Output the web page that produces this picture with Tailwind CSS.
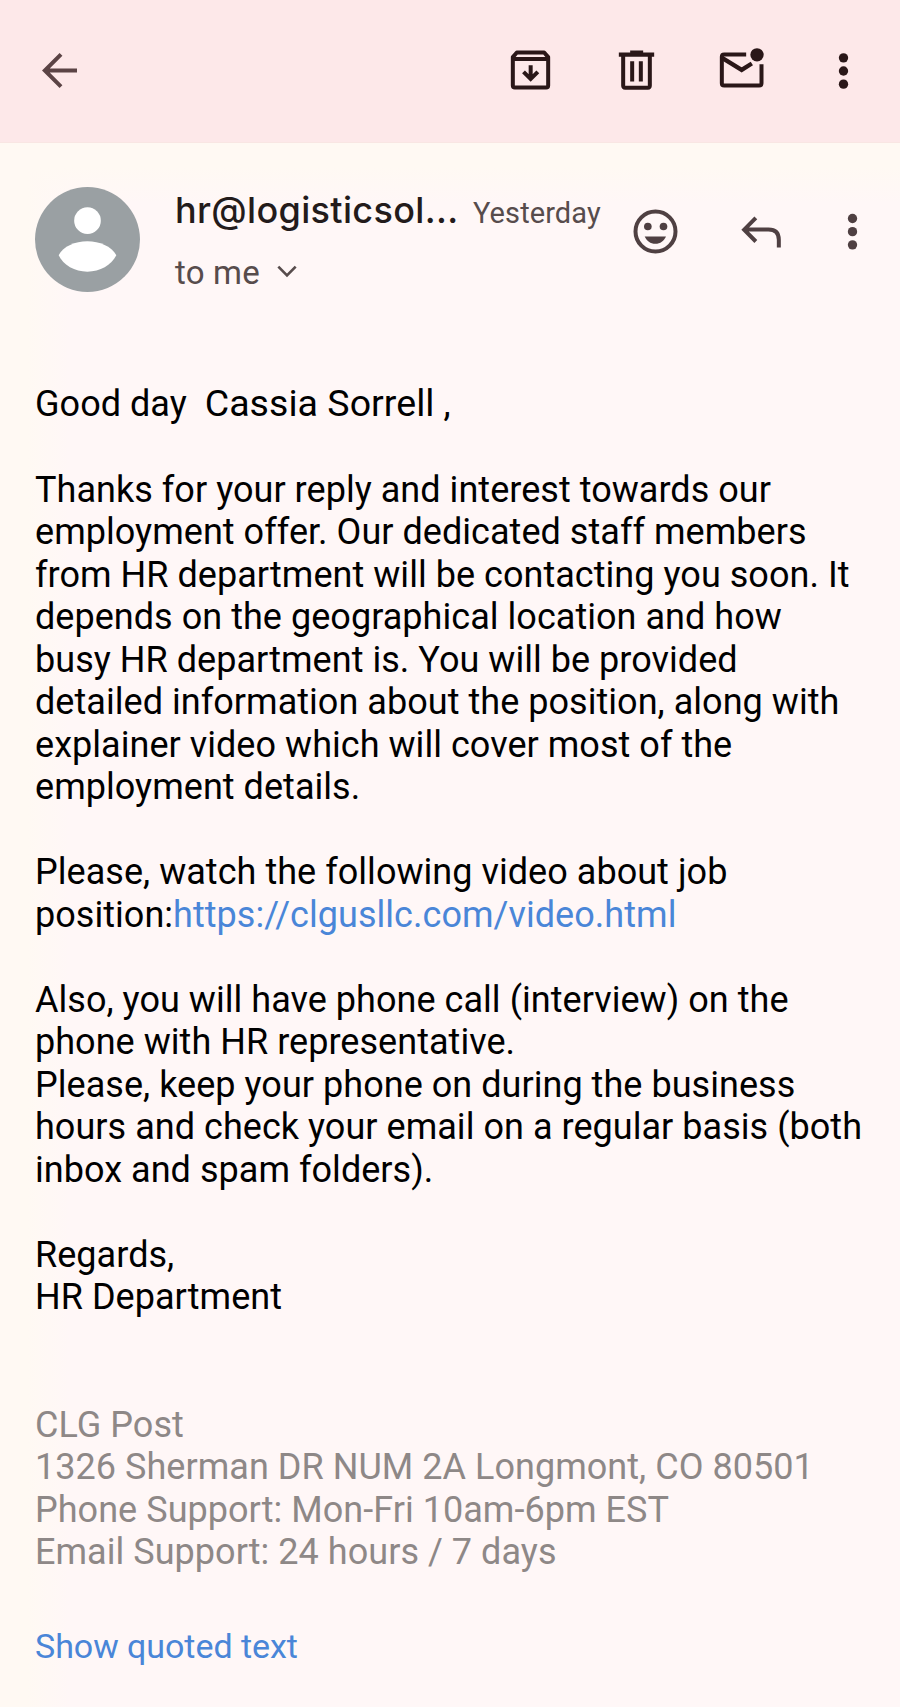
<!DOCTYPE html>
<html lang="en">
<head>
<meta charset="utf-8">
<meta name="viewport" content="width=device-width, initial-scale=1">
<title>Mail</title>
<script src="https://cdn.jsdelivr.net/npm/@tailwindcss/browser@4"></script>
</head>
<body class="bg-[#fff7f7]">
<div class="flex h-[1707px] w-[900px] flex-col overflow-hidden bg-[linear-gradient(to_right,#fff9f3_0px,#fff9f3_28px,#fff7f700_70px)] font-['Roboto',sans-serif] text-black">
  <header class="flex h-[143px] shrink-0 items-center border-b border-[#f9e6e3] bg-[#fde8e9] pr-[30px] pb-[2px] pl-[33px] text-[#2a1718]">
    <svg class="size-[53px] text-[#5b4345]" viewBox="99 130 159 159" fill="none" stroke="currentColor" stroke-width="12"><path d="M231 209.500H136M183 161L134.500 209.500L183 258"/></svg>
    <svg class="ml-auto size-[53px]" viewBox="71.500 40.500 159 159" fill="none" stroke="currentColor" stroke-width="12"><path d="M98 80L110 66H192L204 80V165Q204 171 198 171H104Q98 171 98 165Z" stroke-linejoin="round"/><path d="M98 85.500H204"/><path d="M151.500 104V146M130 124L151.500 145.500L173 124"/></svg>
    <svg class="ml-[52.5px] size-[53px]" viewBox="389.500 40.500 159 159" fill="currentColor"><path d="M416 66H450V60H489V66H522V79H416Z"/><path d="M429 76V165Q429 171.500 435 171.500H503Q509 171.500 509 165V76" fill="none" stroke="currentColor" stroke-width="12"/><path d="M450 92H462V153H450ZM476 92H488V153H476Z"/></svg>
    <svg class="ml-[52.5px] size-[53px]" viewBox="706.500 40.500 159 159" fill="none" stroke="currentColor" stroke-width="12"><path d="M800 72H734Q727 72 727 79V158Q727 165 734 165H839Q846 165 846 158V101"/><path d="M729 83L786.500 118L817 99" stroke-width="13"/><circle cx="832.500" cy="73" r="20" fill="currentColor" stroke="none"/></svg>
    <svg class="ml-[49px] size-[53px]" viewBox="1011.500 40.500 159 159" fill="currentColor"><circle cx="1091" cy="82" r="14"/><circle cx="1091" cy="121.500" r="14"/><circle cx="1091" cy="161" r="14"/></svg>
  </header>

  <section class="flex h-[225px] shrink-0 items-start bg-[linear-gradient(to_bottom,#fff9f3_0px,#fff9f3_25px,#fff7f700_60px)] pt-[44px] pr-[21px] pl-[35px]">
    <svg class="size-[105px]" viewBox="105 562 315 315"><circle cx="262.500" cy="719.500" r="157.500" fill="#9aa0a3"/><circle cx="262.500" cy="663" r="40" fill="#fff"/><path d="M176 767C190 740 225 725 262 725S334 740 349 767C334 797 300 816 262 816S190 797 176 767Z" fill="#fff"/></svg>
    <div class="ml-[35px] flex w-[430px] flex-col">
      <div class="flex h-[48px] items-baseline whitespace-nowrap">
        <span class="w-[298px] font-['Inter',sans-serif] text-[36px] leading-[46px] font-medium tracking-[0.35px] text-[#231b1b]">hr@logisticsol...</span>
        <span class="text-[29px] leading-[46px] tracking-[0.1px] text-[#574c4c]">Yesterday</span>
      </div>
      <div class="mt-[14px] flex h-[48px] items-center whitespace-nowrap text-[#574c4c]">
        <span class="w-[102px] text-[33px] tracking-[0.2px]">to me</span>
        <svg class="mb-[4px] h-[14px] w-[20px]" viewBox="352 280 60 42" fill="none" stroke="currentColor" stroke-width="8"><path d="M356 288L382 314L408 288"/></svg>
      </div>
    </div>
    <div class="ml-auto flex pt-[17.5px] text-[#4f4042]">
      <svg class="size-[53px]" viewBox="86 73.500 159 159" fill="currentColor"><circle cx="165.500" cy="153" r="60" fill="none" stroke="currentColor" stroke-width="12"/><circle cx="142.500" cy="138" r="11.500"/><circle cx="189.500" cy="138" r="11.500"/><path d="M133 168H197C191 181 180 190 165 190S139 181 133 168Z"/></svg>
      <svg class="ml-[52.5px] size-[53px]" viewBox="402.500 73.500 159 159" fill="none" stroke="currentColor" stroke-width="12"><path d="M432 147H503Q534 147 534 178V201M465 112L430 147.500L465 183"/></svg>
      <svg class="ml-[38.5px] size-[53px]" viewBox="676.500 73.500 159 159" fill="currentColor"><circle cx="756" cy="114" r="14"/><circle cx="756" cy="153.500" r="14"/><circle cx="756" cy="193" r="14"/></svg>
    </div>
  </section>

  <main class="flex flex-col pt-[14px] pl-[35px] text-[36px] leading-[42.5px] tracking-[0.04px] whitespace-nowrap">
    <p class="h-[86.500px] whitespace-pre">Good day  <span class="text-[37.500px]">Cassia Sorrell</span> ,</p>
    <p>Thanks for your reply and interest towards our<br>employment offer. Our dedicated staff members<br>from HR department will be contacting you soon. It<br>depends on the geographical location and how<br>busy HR department is. You will be provided<br>detailed information about the position, along with<br>explainer video which will cover most of the<br>employment details.</p>
    <p class="mt-[42.5px]">Please, watch the following video about job<br>position:<a class="text-[#4a86d8]">https://clgusllc.com/video.html</a></p>
    <p class="mt-[42.5px]">Also, you will have phone call (interview) on the<br>phone with HR representative.<br>Please, keep your phone on during the business<br>hours and check your email on a regular basis (both<br>inbox and spam folders).</p>
    <p class="mt-[42.5px]">Regards,<br>HR Department</p>
    <p class="mt-[85px] text-[#8e8887]">CLG Post<br>1326 Sherman DR NUM 2A Longmont, CO 80501<br>Phone Support: Mon-Fri 10am-6pm EST<br>Email Support: 24 hours / 7 days</p>
    <a class="mt-[51px] text-[34px] tracking-[-0.05px] text-[#4a86d8]">Show quoted text</a>
  </main>
</div>
</body>
</html>
